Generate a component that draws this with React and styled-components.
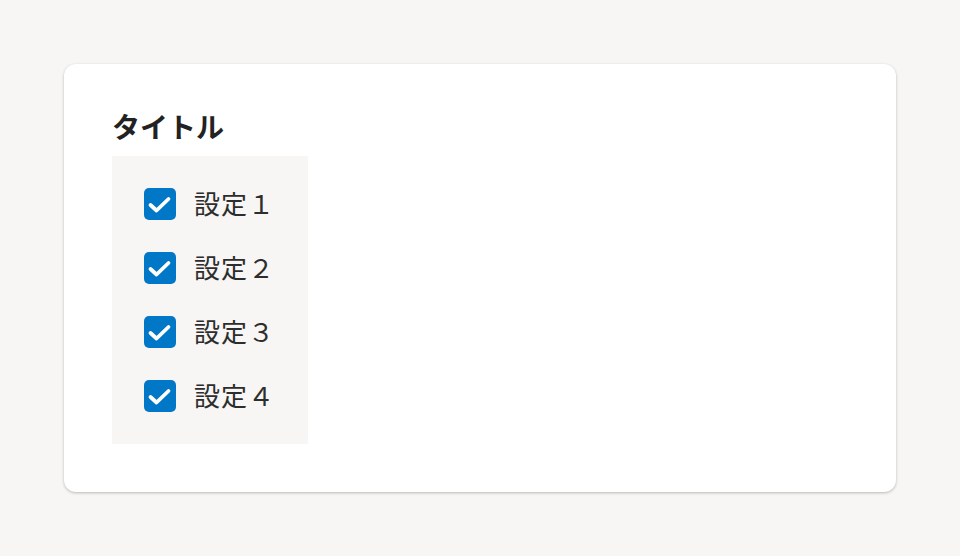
import styled, { createGlobalStyle } from "styled-components";

const GlobalStyle = createGlobalStyle`
  html, body {
    margin: 0;
    padding: 0;
    background: #f7f6f4;
    font-family: "Noto Sans CJK JP", "Noto Sans", sans-serif;
    color: #222;
  }
`;

const Page = styled.div`
  padding: 64px;
  height: 556px;
  box-sizing: border-box;
`;

const Card = styled.section`
  background: #fff;
  border-radius: 12px;
  box-shadow: 0 1px 3px rgba(0, 0, 0, 0.25);
  padding: 48px;
  height: 428px;
  box-sizing: border-box;
`;

const Title = styled.h2`
  margin: 0 0 16px;
  font-size: 28px;
  line-height: 28px;
  font-weight: 700;
`;

const Group = styled.div`
  display: inline-flex;
  flex-direction: column;
  gap: 32px;
  padding: 32px 33px 32px 32px;
  background: #f7f6f4;
`;

const Row = styled.label`
  display: flex;
  align-items: center;
  gap: 18px;
  height: 32px;
`;

const Text = styled.span`
  font-size: 26px;
  line-height: 32px;
  letter-spacing: 1px;
  color: #2d2d2d;
  margin-top: -3px;
`;

const Box = styled.span`
  flex: none;
  width: 32px;
  height: 32px;
  border-radius: 5px;
  background: #0077c7;
  display: block;
`;

const Check = () => (
  <svg width="32" height="32" viewBox="0 0 32 32" fill="none">
    <path d="M6.5 17l6 5.5L24.5 11" stroke="#fff" strokeWidth="3.8" strokeLinecap="round" strokeLinejoin="round" />
  </svg>
);

const items = ["設定１", "設定２", "設定３", "設定４"];

export default function App() {
  return (
    <>
      <GlobalStyle />
      <Page>
        <Card>
          <Title>タイトル</Title>
          <Group>
            {items.map((t) => (
              <Row key={t}>
                <Box>
                  <Check />
                </Box>
                <Text>{t}</Text>
              </Row>
            ))}
          </Group>
        </Card>
      </Page>
    </>
  );
}
